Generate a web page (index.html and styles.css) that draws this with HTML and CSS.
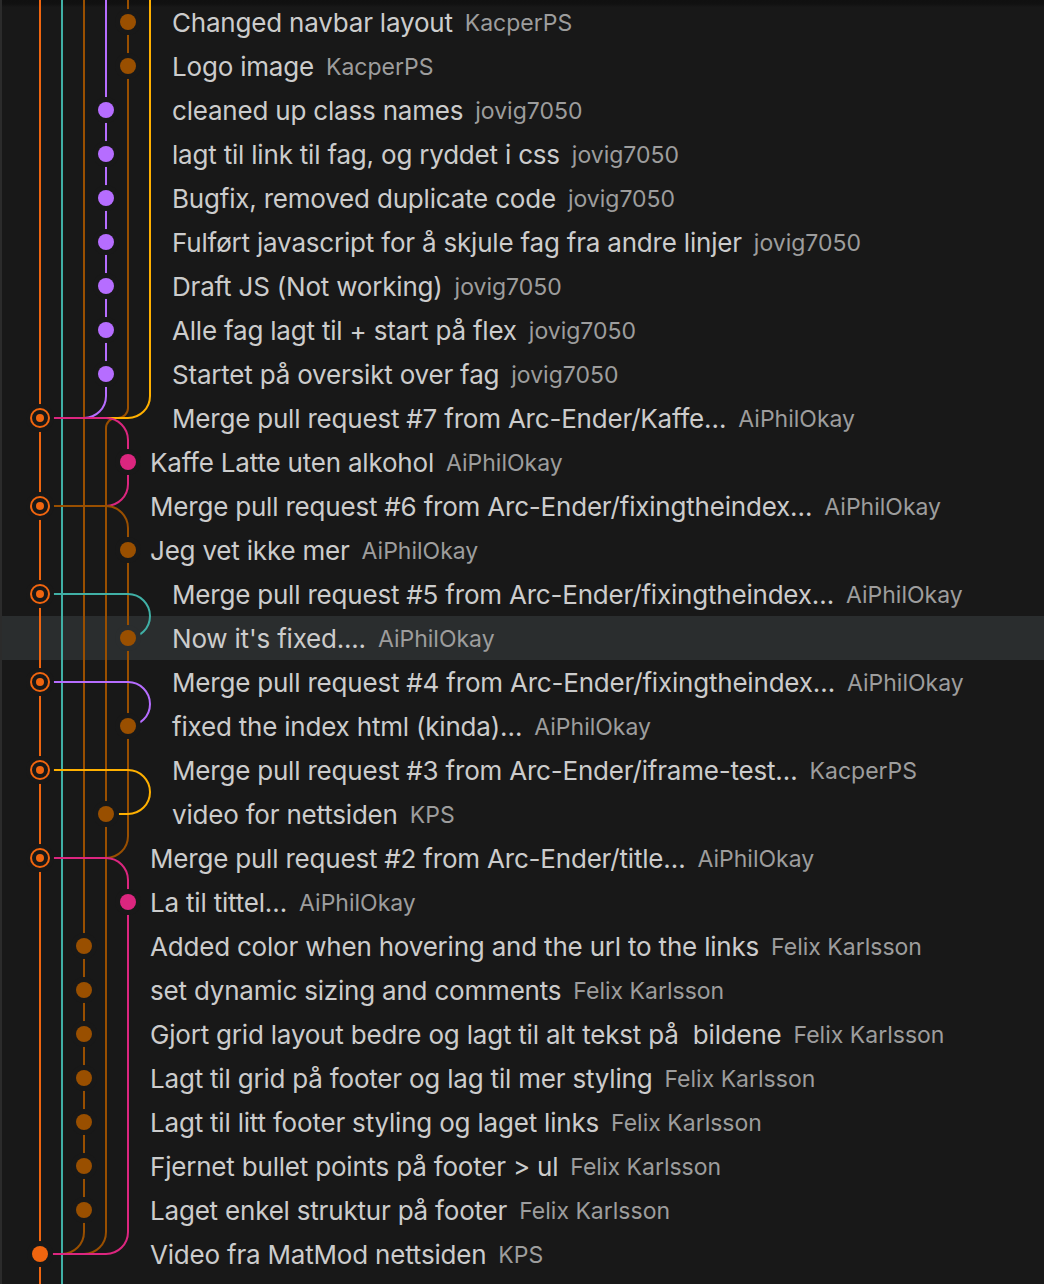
FILE: index.html
```html
<!DOCTYPE html>
<html lang="no">
<head>
<meta charset="utf-8">
<title>Git graph</title>
<link rel="stylesheet" href="styles.css">
</head>
<body>
<div class="list">

<div class="row"><svg class="graph" width="154" height="44"><path class="o" d="M22 0V44"/><path class="t" d="M44 0V44"/><path class="b" d="M66 0V44"/><path class="p" d="M88 0V44"/><path class="b" d="M110 0V44"/><path class="y" d="M132 0V44"/><circle class="cover" cx="110" cy="22" r="13"/><circle class="fb" cx="110" cy="22" r="8"/></svg><span class="title">Changed navbar layout</span><span class="author">KacperPS</span></div>

<div class="row"><svg class="graph" width="154" height="44"><path class="o" d="M22 0V44"/><path class="t" d="M44 0V44"/><path class="b" d="M66 0V44"/><path class="p" d="M88 0V44"/><path class="b" d="M110 0V44"/><path class="y" d="M132 0V44"/><circle class="cover" cx="110" cy="22" r="13"/><circle class="fb" cx="110" cy="22" r="8"/></svg><span class="title">Logo image</span><span class="author">KacperPS</span></div>

<div class="row"><svg class="graph" width="154" height="44"><path class="o" d="M22 0V44"/><path class="t" d="M44 0V44"/><path class="b" d="M66 0V44"/><path class="p" d="M88 0V44"/><path class="b" d="M110 0V44"/><path class="y" d="M132 0V44"/><circle class="cover" cx="88" cy="22" r="13"/><circle class="fp" cx="88" cy="22" r="8"/></svg><span class="title">cleaned up class names</span><span class="author">jovig7050</span></div>

<div class="row"><svg class="graph" width="154" height="44"><path class="o" d="M22 0V44"/><path class="t" d="M44 0V44"/><path class="b" d="M66 0V44"/><path class="p" d="M88 0V44"/><path class="b" d="M110 0V44"/><path class="y" d="M132 0V44"/><circle class="cover" cx="88" cy="22" r="13"/><circle class="fp" cx="88" cy="22" r="8"/></svg><span class="title">lagt til link til fag, og ryddet i css</span><span class="author">jovig7050</span></div>

<div class="row"><svg class="graph" width="154" height="44"><path class="o" d="M22 0V44"/><path class="t" d="M44 0V44"/><path class="b" d="M66 0V44"/><path class="p" d="M88 0V44"/><path class="b" d="M110 0V44"/><path class="y" d="M132 0V44"/><circle class="cover" cx="88" cy="22" r="13"/><circle class="fp" cx="88" cy="22" r="8"/></svg><span class="title">Bugfix, removed duplicate code</span><span class="author">jovig7050</span></div>

<div class="row"><svg class="graph" width="154" height="44"><path class="o" d="M22 0V44"/><path class="t" d="M44 0V44"/><path class="b" d="M66 0V44"/><path class="p" d="M88 0V44"/><path class="b" d="M110 0V44"/><path class="y" d="M132 0V44"/><circle class="cover" cx="88" cy="22" r="13"/><circle class="fp" cx="88" cy="22" r="8"/></svg><span class="title">Fulført javascript for å skjule fag fra andre linjer</span><span class="author">jovig7050</span></div>

<div class="row"><svg class="graph" width="154" height="44"><path class="o" d="M22 0V44"/><path class="t" d="M44 0V44"/><path class="b" d="M66 0V44"/><path class="p" d="M88 0V44"/><path class="b" d="M110 0V44"/><path class="y" d="M132 0V44"/><circle class="cover" cx="88" cy="22" r="13"/><circle class="fp" cx="88" cy="22" r="8"/></svg><span class="title">Draft JS (Not working)</span><span class="author">jovig7050</span></div>

<div class="row"><svg class="graph" width="154" height="44"><path class="o" d="M22 0V44"/><path class="t" d="M44 0V44"/><path class="b" d="M66 0V44"/><path class="p" d="M88 0V44"/><path class="b" d="M110 0V44"/><path class="y" d="M132 0V44"/><circle class="cover" cx="88" cy="22" r="13"/><circle class="fp" cx="88" cy="22" r="8"/></svg><span class="title">Alle fag lagt til + start på flex</span><span class="author">jovig7050</span></div>

<div class="row"><svg class="graph" width="154" height="44"><path class="o" d="M22 0V44"/><path class="t" d="M44 0V44"/><path class="b" d="M66 0V44"/><path class="p" d="M88 0V44"/><path class="b" d="M110 0V44"/><path class="y" d="M132 0V44"/><circle class="cover" cx="88" cy="22" r="13"/><circle class="fp" cx="88" cy="22" r="8"/></svg><span class="title">Startet på oversikt over fag</span><span class="author">jovig7050</span></div>

<div class="row"><svg class="graph" width="154" height="44"><path class="o" d="M22 0V44"/><path class="t" d="M44 0V44"/><path class="b" d="M66 0V44"/><path class="p" d="M88 0A22 22 0 0 1 66 22H22"/><path class="b" d="M110 0V12A10 10 0 0 1 100 22H98A10 10 0 0 0 88 32V44"/><path class="y" d="M132 0A22 22 0 0 1 110 22H22"/><path class="k" d="M88 22A22 22 0 0 1 110 44M88 22H22"/><circle class="cover" cx="22" cy="22" r="14"/><circle class="ro" cx="22" cy="22" r="9"/><circle class="fo" cx="22" cy="22" r="4"/></svg><span class="title">Merge pull request #7 from Arc-Ender/Kaffe…</span><span class="author">AiPhilOkay</span></div>

<div class="row"><svg class="graph" width="132" height="44"><path class="o" d="M22 0V44"/><path class="t" d="M44 0V44"/><path class="b" d="M66 0V44"/><path class="b" d="M88 0V44"/><path class="k" d="M110 0V44"/><circle class="cover" cx="110" cy="22" r="13"/><circle class="fk" cx="110" cy="22" r="8"/></svg><span class="title">Kaffe Latte uten alkohol</span><span class="author">AiPhilOkay</span></div>

<div class="row"><svg class="graph" width="132" height="44"><path class="o" d="M22 0V44"/><path class="t" d="M44 0V44"/><path class="b" d="M66 0V44"/><path class="b" d="M88 0V44"/><path class="k" d="M110 0A22 22 0 0 1 88 22H22"/><path class="b" d="M88 22A22 22 0 0 1 110 44M88 22H22"/><circle class="cover" cx="22" cy="22" r="14"/><circle class="ro" cx="22" cy="22" r="9"/><circle class="fo" cx="22" cy="22" r="4"/></svg><span class="title">Merge pull request #6 from Arc-Ender/fixingtheindex…</span><span class="author">AiPhilOkay</span></div>

<div class="row"><svg class="graph" width="132" height="44"><path class="o" d="M22 0V44"/><path class="t" d="M44 0V44"/><path class="b" d="M66 0V44"/><path class="b" d="M88 0V44"/><path class="b" d="M110 0V44"/><circle class="cover" cx="110" cy="22" r="13"/><circle class="fb" cx="110" cy="22" r="8"/></svg><span class="title">Jeg vet ikke mer</span><span class="author">AiPhilOkay</span></div>

<div class="row"><svg class="graph" width="154" height="44"><path class="o" d="M22 0V44"/><path class="t" d="M44 0V44"/><path class="b" d="M66 0V44"/><path class="b" d="M88 0V44"/><path class="b" d="M110 0V44"/><path class="t" d="M110 22A22 22 0 0 1 132 44M110 22H22"/><circle class="cover" cx="22" cy="22" r="14"/><circle class="ro" cx="22" cy="22" r="9"/><circle class="fo" cx="22" cy="22" r="4"/></svg><span class="title">Merge pull request #5 from Arc-Ender/fixingtheindex…</span><span class="author">AiPhilOkay</span></div>

<div class="row hl"><svg class="graph" width="154" height="44"><path class="o" d="M22 0V44"/><path class="t" d="M44 0V44"/><path class="b" d="M66 0V44"/><path class="b" d="M88 0V44"/><path class="b" d="M110 0V44"/><path class="t" d="M132 0A22 22 0 0 1 110 22"/><circle class="cover" cx="110" cy="22" r="13"/><circle class="fb" cx="110" cy="22" r="8"/></svg><span class="title">Now it's fixed....</span><span class="author">AiPhilOkay</span></div>

<div class="row"><svg class="graph" width="154" height="44"><path class="o" d="M22 0V44"/><path class="t" d="M44 0V44"/><path class="b" d="M66 0V44"/><path class="b" d="M88 0V44"/><path class="b" d="M110 0V44"/><path class="p" d="M110 22A22 22 0 0 1 132 44M110 22H22"/><circle class="cover" cx="22" cy="22" r="14"/><circle class="ro" cx="22" cy="22" r="9"/><circle class="fo" cx="22" cy="22" r="4"/></svg><span class="title">Merge pull request #4 from Arc-Ender/fixingtheindex…</span><span class="author">AiPhilOkay</span></div>

<div class="row"><svg class="graph" width="154" height="44"><path class="o" d="M22 0V44"/><path class="t" d="M44 0V44"/><path class="b" d="M66 0V44"/><path class="b" d="M88 0V44"/><path class="b" d="M110 0V44"/><path class="p" d="M132 0A22 22 0 0 1 110 22"/><circle class="cover" cx="110" cy="22" r="13"/><circle class="fb" cx="110" cy="22" r="8"/></svg><span class="title">fixed the index html (kinda)…</span><span class="author">AiPhilOkay</span></div>

<div class="row"><svg class="graph" width="154" height="44"><path class="o" d="M22 0V44"/><path class="t" d="M44 0V44"/><path class="b" d="M66 0V44"/><path class="b" d="M88 0V44"/><path class="b" d="M110 0V44"/><path class="y" d="M110 22A22 22 0 0 1 132 44M110 22H22"/><circle class="cover" cx="22" cy="22" r="14"/><circle class="ro" cx="22" cy="22" r="9"/><circle class="fo" cx="22" cy="22" r="4"/></svg><span class="title">Merge pull request #3 from Arc-Ender/iframe-test…</span><span class="author">KacperPS</span></div>

<div class="row"><svg class="graph" width="154" height="44"><path class="o" d="M22 0V44"/><path class="t" d="M44 0V44"/><path class="b" d="M66 0V44"/><path class="b" d="M88 0V44"/><path class="b" d="M110 0V44"/><path class="y" d="M132 0A22 22 0 0 1 110 22H88"/><circle class="cover" cx="88" cy="22" r="13"/><circle class="fb" cx="88" cy="22" r="8"/></svg><span class="title">video for nettsiden</span><span class="author">KPS</span></div>

<div class="row"><svg class="graph" width="132" height="44"><path class="o" d="M22 0V44"/><path class="t" d="M44 0V44"/><path class="b" d="M66 0V44"/><path class="b" d="M88 0V44"/><path class="b" d="M110 0A22 22 0 0 1 88 22H22"/><path class="k" d="M88 22A22 22 0 0 1 110 44M88 22H22"/><circle class="cover" cx="22" cy="22" r="14"/><circle class="ro" cx="22" cy="22" r="9"/><circle class="fo" cx="22" cy="22" r="4"/></svg><span class="title">Merge pull request #2 from Arc-Ender/title…</span><span class="author">AiPhilOkay</span></div>

<div class="row"><svg class="graph" width="132" height="44"><path class="o" d="M22 0V44"/><path class="t" d="M44 0V44"/><path class="b" d="M66 0V44"/><path class="b" d="M88 0V44"/><path class="k" d="M110 0V44"/><circle class="cover" cx="110" cy="22" r="13"/><circle class="fk" cx="110" cy="22" r="8"/></svg><span class="title">La til tittel…</span><span class="author">AiPhilOkay</span></div>

<div class="row"><svg class="graph" width="132" height="44"><path class="o" d="M22 0V44"/><path class="t" d="M44 0V44"/><path class="b" d="M66 0V44"/><path class="b" d="M88 0V44"/><path class="k" d="M110 0V44"/><circle class="cover" cx="66" cy="22" r="13"/><circle class="fb" cx="66" cy="22" r="8"/></svg><span class="title">Added color when hovering and the url to the links</span><span class="author">Felix Karlsson</span></div>

<div class="row"><svg class="graph" width="132" height="44"><path class="o" d="M22 0V44"/><path class="t" d="M44 0V44"/><path class="b" d="M66 0V44"/><path class="b" d="M88 0V44"/><path class="k" d="M110 0V44"/><circle class="cover" cx="66" cy="22" r="13"/><circle class="fb" cx="66" cy="22" r="8"/></svg><span class="title">set dynamic sizing and comments</span><span class="author">Felix Karlsson</span></div>

<div class="row"><svg class="graph" width="132" height="44"><path class="o" d="M22 0V44"/><path class="t" d="M44 0V44"/><path class="b" d="M66 0V44"/><path class="b" d="M88 0V44"/><path class="k" d="M110 0V44"/><circle class="cover" cx="66" cy="22" r="13"/><circle class="fb" cx="66" cy="22" r="8"/></svg><span class="title">Gjort grid layout bedre og lagt til alt tekst på  bildene</span><span class="author">Felix Karlsson</span></div>

<div class="row"><svg class="graph" width="132" height="44"><path class="o" d="M22 0V44"/><path class="t" d="M44 0V44"/><path class="b" d="M66 0V44"/><path class="b" d="M88 0V44"/><path class="k" d="M110 0V44"/><circle class="cover" cx="66" cy="22" r="13"/><circle class="fb" cx="66" cy="22" r="8"/></svg><span class="title">Lagt til grid på footer og lag til mer styling</span><span class="author">Felix Karlsson</span></div>

<div class="row"><svg class="graph" width="132" height="44"><path class="o" d="M22 0V44"/><path class="t" d="M44 0V44"/><path class="b" d="M66 0V44"/><path class="b" d="M88 0V44"/><path class="k" d="M110 0V44"/><circle class="cover" cx="66" cy="22" r="13"/><circle class="fb" cx="66" cy="22" r="8"/></svg><span class="title">Lagt til litt footer styling og laget links</span><span class="author">Felix Karlsson</span></div>

<div class="row"><svg class="graph" width="132" height="44"><path class="o" d="M22 0V44"/><path class="t" d="M44 0V44"/><path class="b" d="M66 0V44"/><path class="b" d="M88 0V44"/><path class="k" d="M110 0V44"/><circle class="cover" cx="66" cy="22" r="13"/><circle class="fb" cx="66" cy="22" r="8"/></svg><span class="title">Fjernet bullet points på footer &gt; ul</span><span class="author">Felix Karlsson</span></div>

<div class="row"><svg class="graph" width="132" height="44"><path class="o" d="M22 0V44"/><path class="t" d="M44 0V44"/><path class="b" d="M66 0V44"/><path class="b" d="M88 0V44"/><path class="k" d="M110 0V44"/><circle class="cover" cx="66" cy="22" r="13"/><circle class="fb" cx="66" cy="22" r="8"/></svg><span class="title">Laget enkel struktur på footer</span><span class="author">Felix Karlsson</span></div>

<div class="row"><svg class="graph" width="132" height="44"><path class="o" d="M22 0V44"/><path class="t" d="M44 0V44"/><path class="b" d="M66 0A22 22 0 0 1 44 22H22"/><path class="b" d="M88 0A22 22 0 0 1 66 22H22"/><path class="k" d="M110 0A22 22 0 0 1 88 22H22"/><circle class="cover" cx="22" cy="22" r="13"/><circle class="fo" cx="22" cy="22" r="8"/></svg><span class="title">Video fra MatMod nettsiden</span><span class="author">KPS</span></div>

<div class="row"><svg class="graph" width="66" height="44"><path class="o" d="M22 0V44"/><path class="t" d="M44 0V44"/></svg></div>

</div>
</body>
</html>
```

FILE: styles.css
```css
html, body {
  margin: 0;
  padding: 0;
  background: #181818;
  overflow: hidden;
}

body {
  font-family: Inter, "Noto Sans", "Liberation Sans", sans-serif;
  -webkit-font-smoothing: antialiased;
}

.list {
  min-height: 1284px;
  border-left: 2px solid #2b2b2b;
  background: linear-gradient(#101010 0, #111111 4px, #181818 7px, #181818 100%);
}

.row {
  --bg: #181818;
  display: flex;
  align-items: center;
  height: 44px;
  padding-left: 16px;
  white-space: pre;
}

.row.hl {
  --bg: #2a2d2e;
  background: #2a2d2e;
}

.graph {
  flex: none;
  display: block;
  height: 44px;
}

.graph path {
  fill: none;
  stroke-width: 2;
}

.graph .o { stroke: #f0650f; }
.graph .t { stroke: #40b0a6; }
.graph .b { stroke: #994f00; }
.graph .p { stroke: #b66dff; }
.graph .k { stroke: #dc267f; }
.graph .y { stroke: #ffb000; }

.graph .cover { fill: var(--bg); }
.graph .fo { fill: #f0650f; }
.graph .fb { fill: #994f00; }
.graph .fp { fill: #b66dff; }
.graph .fk { fill: #dc267f; }
.graph .ro {
  fill: none;
  stroke: #f0650f;
  stroke-width: 2;
}

.title,
.author {
  line-height: 44px;
  padding-top: 2px;
}

.title {
  color: #cccccc;
  font-size: 26px;
  letter-spacing: -0.2px;
}

.author {
  color: #9d9d9d;
  font-size: 23px;
  margin-left: 12px;
}
```
